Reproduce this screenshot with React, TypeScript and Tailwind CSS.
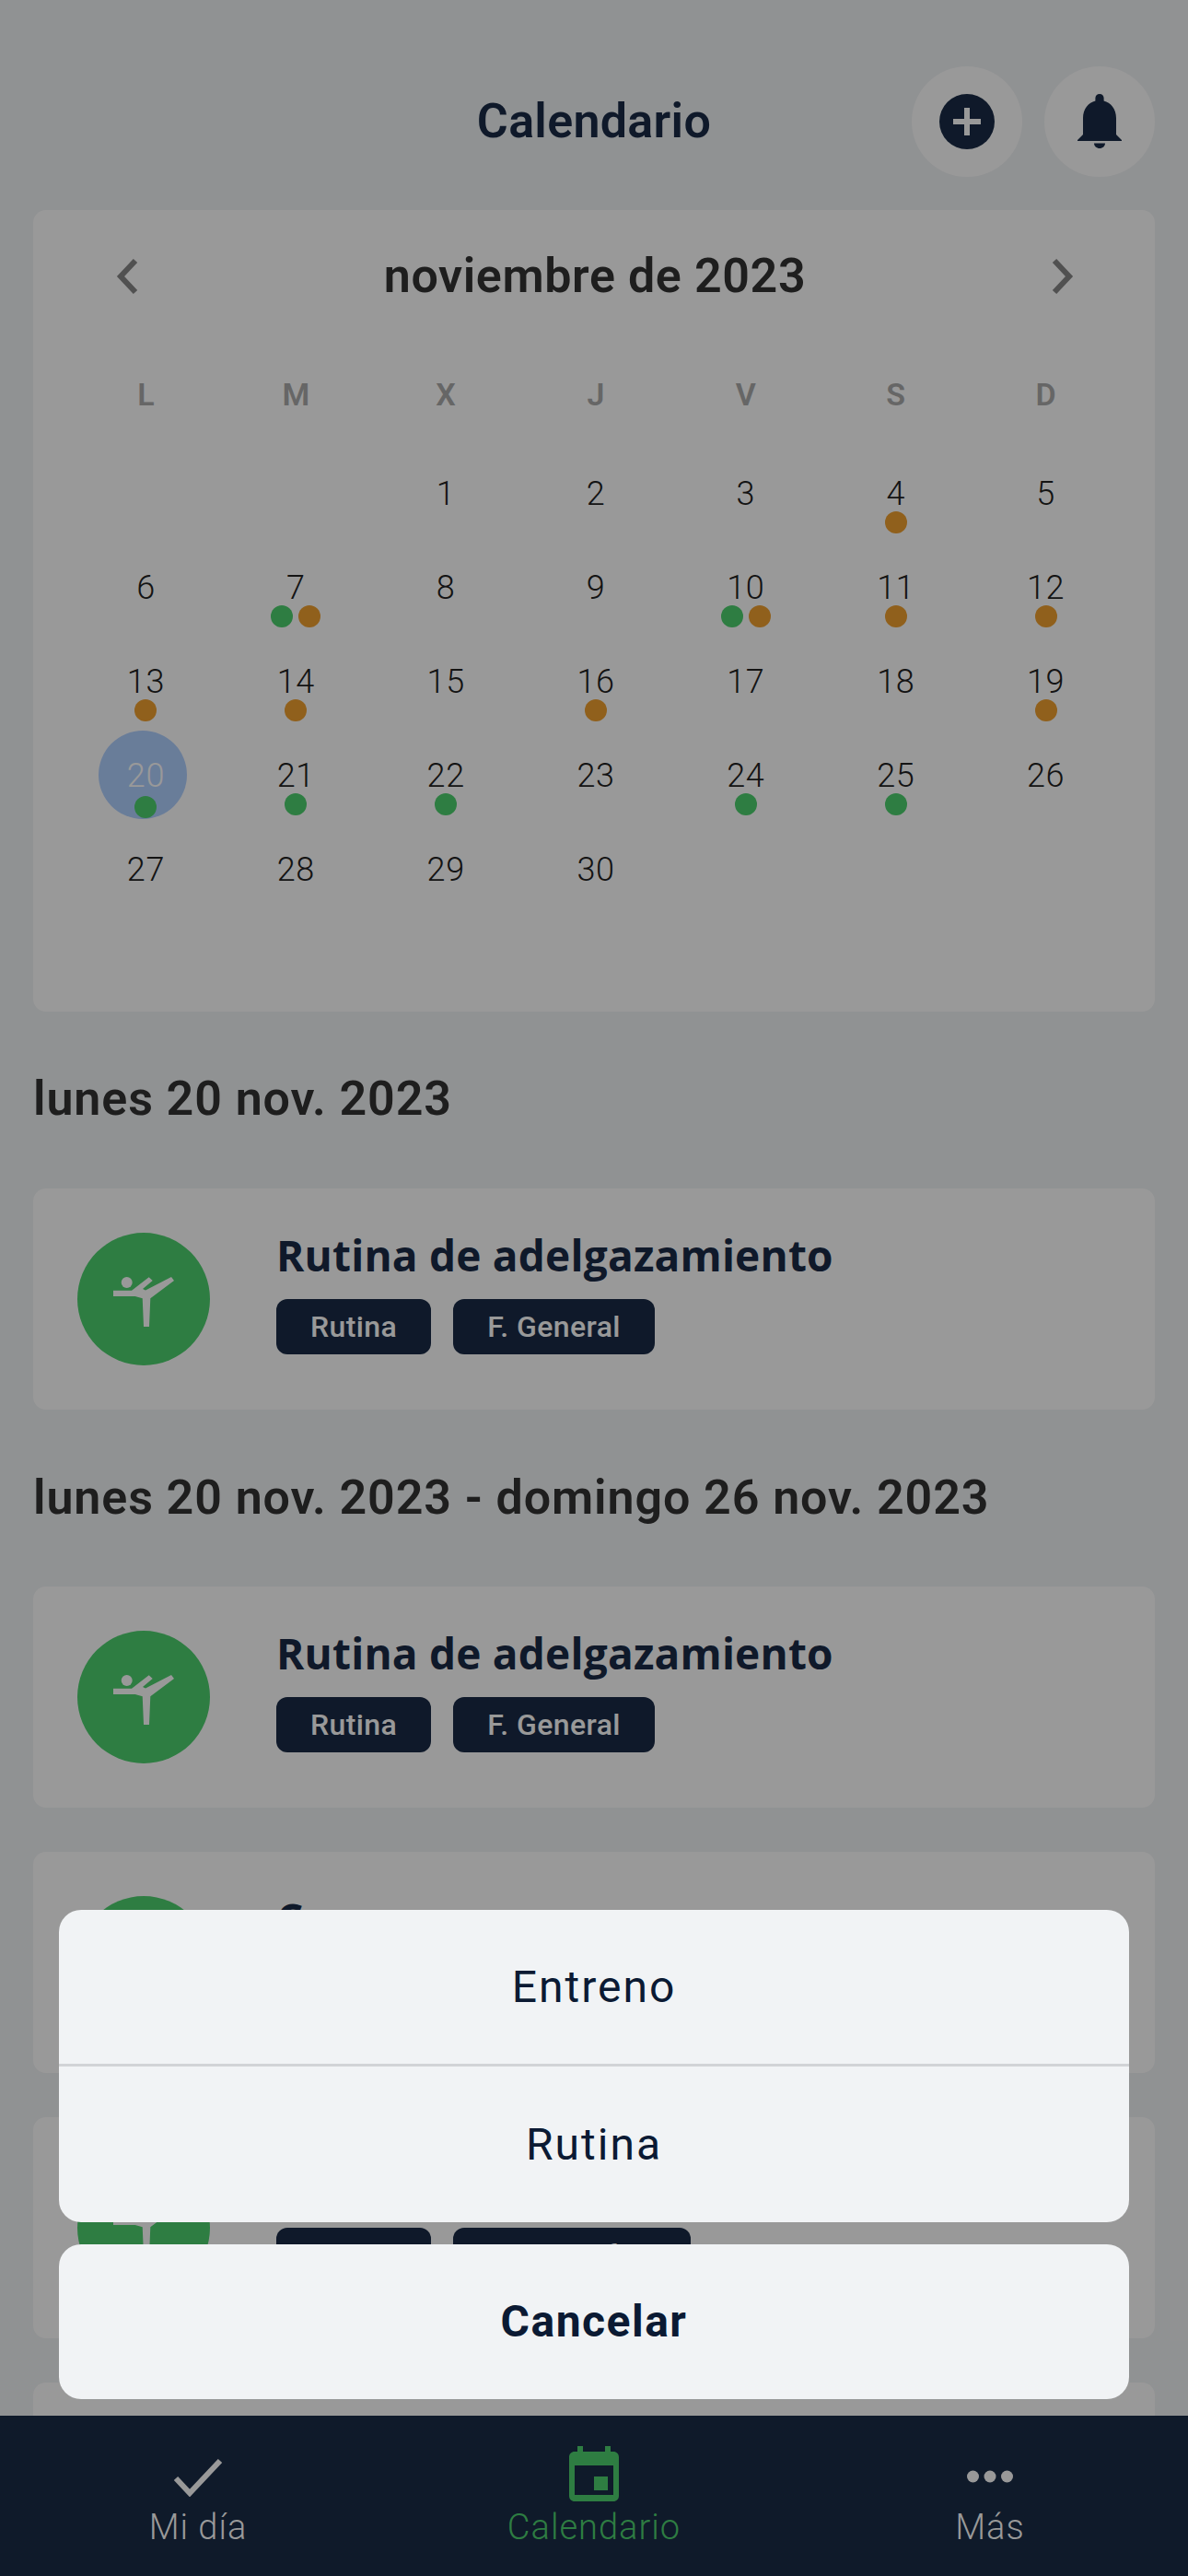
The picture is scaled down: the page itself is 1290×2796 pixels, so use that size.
const sans = "font-['Roboto',sans-serif]"

const WEEK = ['L', 'M', 'X', 'J', 'V', 'S', 'D']

// g = rutina, o = entreno
const MARKS: Record<number, string[]> = {
  4: ['o'],
  7: ['g', 'o'],
  10: ['g', 'o'],
  11: ['o'],
  12: ['o'],
  13: ['o'],
  14: ['o'],
  16: ['o'],
  19: ['o'],
  20: ['g'],
  21: ['g'],
  22: ['g'],
  24: ['g'],
  25: ['g'],
}

function KickIcon() {
  return (
    <svg width="66" height="54" viewBox="0 0 66 54" fill="#ffffff" className="mt-[6px]">
      <circle cx="14.700" cy="6" r="6" />
      <path d="M0 14.700h20L38.700 .3l4 3.700L32 13l3 1.500L63 0l3 4-25.700 19.300L39 54h-6l-1.300-30.700L23.700 21H0z" />
    </svg>
  )
}

function Chevron({ right }: { right?: boolean }) {
  return (
    <svg width="26" height="38" viewBox="0 0 26 38" fill="none" stroke="#888888" strokeWidth="6" className={right ? 'rotate-180' : ''}>
      <path d="M22 2L6 19l16 17" />
    </svg>
  )
}

function DayCell({ day }: { day: number }) {
  const marks = MARKS[day] ?? []
  const selected = day === 20
  return (
    <div className="relative flex h-[102px] flex-col items-center pt-[13px]">
      {selected && <div className="absolute top-[-14px] left-[30px] h-[96px] w-[96px] rounded-full bg-[#b0d0ff]" />}
      <span className={`relative text-[36px] leading-[44px] font-light tracking-[0.6px] ${selected ? 'text-white' : 'text-[#222222]'}`}>{day}</span>
      <div className={`relative flex gap-[6px] ${selected ? 'mt-0' : 'mt-[-3px]'}`}>
        {marks.map((m) => (
          <span key={m} className={`h-[24px] w-[24px] rounded-full ${m === 'g' ? 'bg-[#4dd06e]' : 'bg-[#f0a030]'}`} />
        ))}
      </div>
    </div>
  )
}

function PlanCard({ title, tags }: { title: string; tags: string[] }) {
  return (
    <div className="flex h-[240px] shrink-0 items-start gap-[72px] rounded-[14px] bg-white px-[48px] pt-[48px]">
      <div className="flex h-[144px] w-[144px] shrink-0 items-center justify-center rounded-full bg-[#4dd06e]">
        <KickIcon />
      </div>
      <div className="flex flex-col">
        <div className="font-['Open_Sans',sans-serif] text-[46px] leading-[48px] font-bold tracking-[0.2px] text-[#192b46]">{title}</div>
        <div className="mt-[24px] flex gap-[24px]">
          {tags.map((t) => (
            <span key={t} className="flex h-[60px] items-center rounded-[12px] bg-[#192b46] px-[37px] text-[32px] leading-[40px] font-medium tracking-[0.4px] text-white">
              {t}
            </span>
          ))}
        </div>
      </div>
    </div>
  )
}

export default function App() {
  const days: (number | null)[] = [null, null, ...Array.from({ length: 30 }, (_, i) => i + 1)]

  return (
    <div className={`flex h-[2796px] w-[1290px] flex-col overflow-hidden bg-[#f1f3f5] ${sans}`}>
      <div className="relative min-h-0 flex-1 overflow-hidden">
        <div className="flex flex-col px-[36px] pt-[72px]">
          <header className="relative flex h-[120px] items-center justify-center">
            <h1 className="text-[52px] font-semibold tracking-[0.3px] text-[#192b46]">Calendario</h1>
            <div className="absolute top-0 right-0 flex gap-[24px]">
              <button className="flex h-[120px] w-[120px] items-center justify-center rounded-full bg-white">
                <svg width="60" height="60" viewBox="0 0 60 60">
                  <circle cx="30" cy="30" r="30" fill="#192b46" />
                  <path d="M27 15h6v12h12v6H33v12h-6V33H15v-6h12z" fill="#ffffff" />
                </svg>
              </button>
              <button className="flex h-[120px] w-[120px] items-center justify-center rounded-full bg-white">
                <svg width="48" height="60" viewBox="0 0 48 60" fill="#192b46">
                  <path d="M24 0c2.800 0 4.600 2 4.600 4.500v3C36 9.500 42 16 42 26v18l6 6v1H0v-1l6-6V26C6 16 12 9.500 19.400 7.500v-3C19.400 2 21.200 0 24 0z" />
                  <path d="M18 53.500h12c0 3-2.700 5.500-6 5.500s-6-2.500-6-5.500z" />
                </svg>
              </button>
            </div>
          </header>

          <section className="mt-[36px] h-[870px] rounded-[14px] bg-white pt-[36px] pr-[37px] pl-[41px]">
            <div className="flex h-[72px] items-center justify-between pr-[50px] pl-[48px]">
              <Chevron />
              <span className="text-[52px] font-semibold tracking-[0.6px] text-[#333333]">noviembre de 2023</span>
              <Chevron right />
            </div>
            <div className="mt-[64px] grid grid-cols-7">
              {WEEK.map((d) => (
                <div key={d} className="h-[56px] text-center text-[34px] leading-[56px] font-semibold text-[#aaaaaa]">
                  {d}
                </div>
              ))}
            </div>
            <div className="mt-[45px] grid grid-cols-7">
              {days.map((d, i) => (
                <div key={i}>{d !== null ? <DayCell day={d} /> : <div className="h-[102px]" />}</div>
              ))}
            </div>
          </section>

          <h2 className="mt-[65px] h-[60px] text-[52px] leading-[60px] font-semibold tracking-[0.9px] text-[#333333]">lunes 20 nov. 2023</h2>
          <div className="mt-[67px]">
            <PlanCard title="Rutina de adelgazamiento" tags={['Rutina', 'F. General']} />
          </div>
          <h2 className="mt-[66px] h-[60px] text-[52px] leading-[60px] font-semibold tracking-[0.9px] text-[#333333]">
            lunes 20 nov. 2023 - domingo 26 nov. 2023
          </h2>
          <div className="mt-[66px] flex flex-col gap-[48px]">
            <PlanCard title="Rutina de adelgazamiento" tags={['Rutina', 'F. General']} />
            <PlanCard title="Cuerpo" tags={['Rutina', 'F. General']} />
            <PlanCard title="Rutina" tags={['Rutina', 'F. Específica']} />
            {/* next card only peeks out above the tab bar */}
            <div className="h-[240px] shrink-0 rounded-[14px] bg-white" />
          </div>
        </div>

        <div className="absolute inset-0 bg-black/40" />

        <div className="absolute right-[64px] bottom-[18px] left-[64px] flex flex-col gap-[24px] text-[48px] tracking-[2px] text-[#0b1a33]">
          <div className="flex flex-col overflow-hidden rounded-[24px] bg-[#f1f3f5]">
            <button className="h-[170px] border-b-[3px] border-[#d1d3d6]">Entreno</button>
            <button className="h-[169px]">Rutina</button>
          </div>
          <button className="h-[168px] rounded-[24px] bg-[#f1f3f5] font-bold tracking-[1.5px]">Cancelar</button>
        </div>
      </div>

      <nav className="grid h-[174px] shrink-0 grid-cols-3 bg-[#0f1a2a] text-[38px] font-light tracking-[1px] text-[#999999]">
        <div className="flex flex-col items-center pt-[47px]">
          <svg width="54" height="41" viewBox="0 0 54 41" fill="none" stroke="currentColor" strokeWidth="6">
            <path d="M3 21l15 16L51 2" />
          </svg>
          <span className="mt-[9px] leading-[48px]">Mi día</span>
        </div>
        <div className="flex flex-col items-center pt-[33px] text-[#2e7d42]">
          <svg width="54" height="60" viewBox="0 0 54 60" fill="currentColor">
            <path d="M9 0h6v6h24V0h6v6h3c3.500 0 6 2.500 6 6v42c0 3.500-2.500 6-6 6H6c-3.500 0-6-2.500-6-6V12c0-3.500 2.500-6 6-6h3zM6 21v32h42V21z" fillRule="evenodd" />
            <rect x="27" y="33" width="15" height="15" />
          </svg>
          <span className="mt-[4px] leading-[48px]">Calendario</span>
        </div>
        <div className="flex flex-col items-center pt-[39px]">
          <svg width="50" height="54" viewBox="0 0 50 54" fill="currentColor">
            <circle cx="6.500" cy="27" r="6.500" />
            <circle cx="25" cy="27" r="6.500" />
            <circle cx="43.500" cy="27" r="6.500" />
          </svg>
          <span className="mt-[4px] leading-[48px]">Más</span>
        </div>
      </nav>
    </div>
  )
}
